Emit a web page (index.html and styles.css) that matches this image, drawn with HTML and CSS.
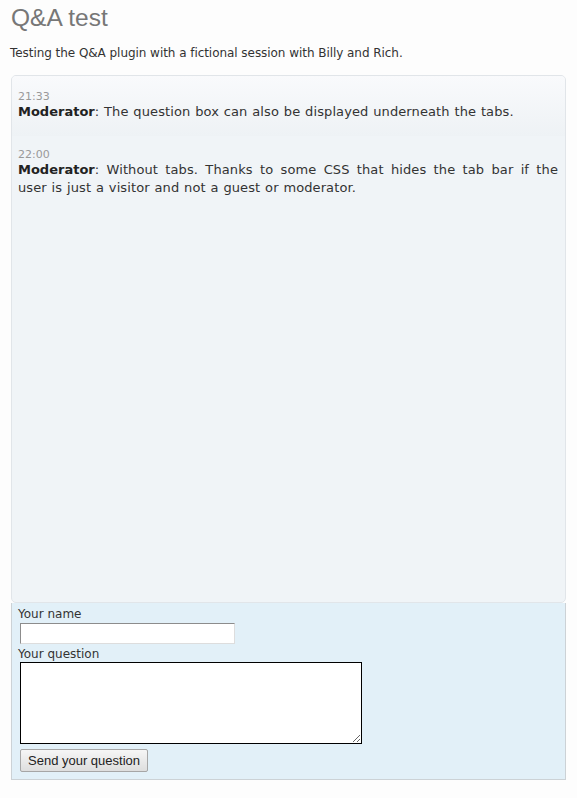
FILE: index.html
```html
<!DOCTYPE html>
<html>
<head>
<meta charset="utf-8">
<link rel="stylesheet" href="styles.css">
</head>
<body>
<div class="page">
  <h1 class="title">Q&amp;A test</h1>
  <p class="intro">Testing the Q&amp;A plugin with a fictional session with Billy and Rich.</p>
  <div class="chat">
    <div class="msg msg-first">
      <div class="time">21:33</div>
      <p class="text"><b>Moderator</b>: The question box can also be displayed underneath the tabs.</p>
    </div>
    <div class="msg">
      <div class="time">22:00</div>
      <p class="text"><b>Moderator</b>: Without tabs. Thanks to some CSS that hides the tab bar if the user is just a visitor and not a guest or moderator.</p>
    </div>
  </div>
  <form class="ask">
    <label class="lbl">Your name</label>
    <input class="name" type="text">
    <label class="lbl lbl-q">Your question</label>
    <textarea class="question"></textarea>
    <button class="send" type="button">Send your question</button>
  </form>
</div>
</body>
</html>
```
FILE: styles.css
```css
html, body {
  margin: 0;
  padding: 0;
  background: #fdfdfd;
}
.page {
  padding: 0 11px;
  font-family: "DejaVu Sans", sans-serif;
  color: #333;
}
.title {
  margin: 0;
  padding-top: 4px;
  font-family: "Liberation Sans", Arial, sans-serif;
  font-weight: normal;
  font-size: 24.5px;
  line-height: 28px;
  color: #777;
}
.intro {
  margin: 14px 0 0 -1px;
  font-size: 12px;
  line-height: 15px;
  letter-spacing: -0.05px;
  color: #333;
}
.chat {
  margin-top: 14px;
  height: 526px;
  border: 1px solid #e1e5e9;
  border-radius: 5px;
  background: #f0f4f7;
  overflow: hidden;
}
.msg {
  padding: 14px 7px 6px 6px;
}
.msg-first {
  height: 40px;
  background: linear-gradient(#f9fafc, #eef2f5);
}
.msg + .msg {
  padding-top: 12px;
}
.time {
  font-size: 11px;
  line-height: 13px;
  color: #999;
}
.text {
  margin: 0;
  font-size: 13px;
  line-height: 18px;
  letter-spacing: 0.1px;
  word-spacing: 0.6px;
  color: #333;
  text-align: justify;
}
.text b {
  color: #222;
  letter-spacing: 0;
}
.ask {
  display: flex;
  flex-direction: column;
  align-items: flex-start;
  margin: 0;
  border: 1px solid #ccd2d6;
  border-top: none;
  background: #e2f0f8;
  padding: 3px 6px 7px 6px;
}
.lbl {
  font-size: 12px;
  line-height: 16px;
  color: #333;
}
.lbl-q {
  margin-top: 3px;
  line-height: 14px;
}
.name {
  margin: 1px 0 0 2px;
  width: 211px;
  height: 17px;
  padding: 1px;
  border: 1px solid;
  border-color: #8c8c8c #ddd #ddd #8c8c8c;
  background: #fff;
  box-sizing: content-box;
}
.question {
  margin: 1px 0 0 2px;
  width: 338px;
  height: 78px;
  border: 1px solid #000;
  padding: 1px;
  background: #fff;
  box-sizing: content-box;
}
.send {
  margin: 5px 0 0 2px;
  height: 23px;
  padding: 0 7px;
  font-family: "Liberation Sans", Arial, sans-serif;
  font-size: 13px;
  color: #222;
  border: 1px solid #a6a6a6;
  border-radius: 2px;
  background: linear-gradient(#f6f6f6, #dedede);
}
```
